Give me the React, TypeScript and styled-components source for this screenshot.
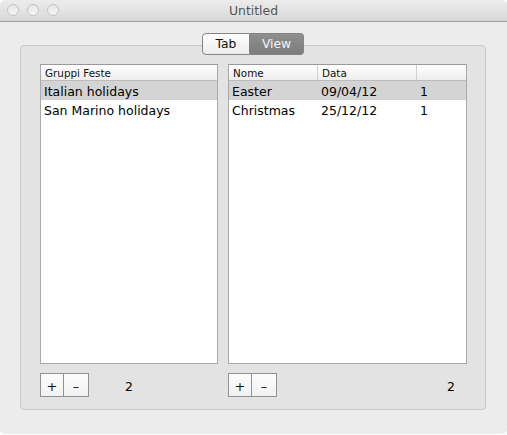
import React from "react";
import styled, { createGlobalStyle } from "styled-components";

const Global = createGlobalStyle`
  html, body { margin: 0; padding: 0; background: #ffffff; }
  body { font-family: "DejaVu Sans", "Liberation Sans", sans-serif; }
  * { box-sizing: border-box; }
`;

const Window = styled.div`
  width: 507px;
  height: 434px;
  background: #ececec;
  border-radius: 5px 5px 5px 5px;
  display: flex;
  flex-direction: column;
  overflow: hidden;
`;

const TitleBar = styled.div`
  height: 22px;
  flex: none;
  background: linear-gradient(#ececec, #d9d9d9);
  border-bottom: 1px solid #9c9c9c;
  display: grid;
  grid-template-columns: 80px 1fr 80px;
  align-items: center;
`;

const Lights = styled.div`
  display: flex;
  gap: 8px;
  padding-left: 7px;
  padding-bottom: 1px;
`;

const Light = styled.span`
  width: 12px;
  height: 12px;
  border-radius: 50%;
  border: 1px solid #c2c2c2;
  background: linear-gradient(#e6e6e6, #f6f6f6);
`;

const Title = styled.div`
  text-align: center;
  font-size: 12.4px;
  color: #555555;
  padding-bottom: 1px;
`;

const Content = styled.div`
  flex: 1;
  display: flex;
  flex-direction: column;
  padding: 11px 21px 24px 20px;
`;

const TabRow = styled.div`
  display: flex;
  justify-content: center;
  margin-bottom: -10px;
  position: relative;
  z-index: 1;
`;

const Segment = styled.div<{ $active?: boolean; $pos: "first" | "last" }>`
  height: 22px;
  width: ${(p) => (p.$pos === "first" ? "48px" : "54px")};
  display: flex;
  align-items: center;
  justify-content: center;
  font-size: 12.3px;
  color: ${(p) => (p.$active ? "#f4f4f4" : "#111111")};
  background: ${(p) =>
    p.$active
      ? "linear-gradient(#8f8f8f, #7c7c7c)"
      : "linear-gradient(#ffffff, #ececec)"};
  border: 1px solid #848484;
  border-left-width: ${(p) => (p.$pos === "last" ? "0" : "1px")};
  border-radius: ${(p) => (p.$pos === "first" ? "4px 0 0 4px" : "0 4px 4px 0")};
`;

const GroupBox = styled.div`
  height: 365px;
  background: #e3e3e3;
  border: 1px solid #c9c9c9;
  border-radius: 4px;
  padding: 18px 18px 12px 19px;
  display: grid;
  grid-template-columns: 178px 239px;
  grid-template-rows: 300px 24px;
  column-gap: 10px;
  row-gap: 9px;
`;

const ListBox = styled.div`
  background: #ffffff;
  border: 1px solid #a9a9a9;
  border-top-color: #9a9a9a;
  display: flex;
  flex-direction: column;
`;

const HeaderRow = styled.div<{ $cols: string }>`
  height: 16px;
  flex: none;
  display: grid;
  grid-template-columns: ${(p) => p.$cols};
  background: linear-gradient(#ffffff, #eeeeee);
  border-bottom: 1px solid #bcbcbc;
`;

const HeaderCell = styled.div<{ $divider?: boolean }>`
  font-size: 10.4px;
  color: #111111;
  padding-left: 4px;
  display: flex;
  align-items: center;
  border-right: ${(p) => (p.$divider ? "1px solid #d0d0d0" : "none")};
  white-space: nowrap;
`;

const Row = styled.div<{ $cols: string; $selected?: boolean }>`
  height: 19px;
  display: grid;
  grid-template-columns: ${(p) => p.$cols};
  background: ${(p) => (p.$selected ? "#d4d4d4" : "transparent")};
`;

const Cell = styled.div`
  font-size: 12.5px;
  color: #000000;
  padding-left: 3px;
  padding-top: 1px;
  display: flex;
  align-items: center;
  white-space: nowrap;
`;

const Footer = styled.div<{ $spread?: boolean }>`
  display: flex;
  align-items: center;
  justify-content: ${(p) => (p.$spread ? "space-between" : "flex-start")};
`;

const ButtonPair = styled.div`
  display: flex;
`;

const SquareButton = styled.button<{ $last?: boolean }>`
  width: ${(p) => (p.$last ? "25px" : "24px")};
  height: 24px;
  padding: 0;
  margin: 0;
  border: 1px solid #929292;
  border-left-width: ${(p) => (p.$last ? "0" : "1px")};
  background: linear-gradient(#fdfdfd, #f1f1f1);
  font-family: "DejaVu Sans", sans-serif;
  font-size: 13px;
  color: #111111;
  display: flex;
  align-items: center;
  justify-content: center;
  padding-top: 2px;
`;

const Count = styled.span<{ $left?: number; $right?: number }>`
  font-size: 12.5px;
  color: #000000;
  margin-left: ${(p) => p.$left ?? 0}px;
  margin-right: ${(p) => p.$right ?? 0}px;
  padding-top: 3px;
`;

const LEFT_COLS = "1fr";
const RIGHT_COLS = "89px 99px 1fr";

const groups = [
  { name: "Italian holidays", selected: true },
  { name: "San Marino holidays" },
];

const feste = [
  { nome: "Easter", data: "09/04/12", n: "1", selected: true },
  { nome: "Christmas", data: "25/12/12", n: "1" },
];

export default function App() {
  return (
    <>
      <Global />
      <Window>
        <TitleBar>
          <Lights>
            <Light />
            <Light />
            <Light />
          </Lights>
          <Title>Untitled</Title>
          <div />
        </TitleBar>
        <Content>
          <TabRow>
            <Segment $pos="first">Tab</Segment>
            <Segment $pos="last" $active>
              View
            </Segment>
          </TabRow>
          <GroupBox>
            <ListBox>
              <HeaderRow $cols={LEFT_COLS}>
                <HeaderCell>Gruppi Feste</HeaderCell>
              </HeaderRow>
              {groups.map((g) => (
                <Row key={g.name} $cols={LEFT_COLS} $selected={g.selected}>
                  <Cell>{g.name}</Cell>
                </Row>
              ))}
            </ListBox>
            <ListBox>
              <HeaderRow $cols={RIGHT_COLS}>
                <HeaderCell $divider>Nome</HeaderCell>
                <HeaderCell $divider>Data</HeaderCell>
                <HeaderCell />
              </HeaderRow>
              {feste.map((f) => (
                <Row key={f.nome} $cols={RIGHT_COLS} $selected={f.selected}>
                  <Cell>{f.nome}</Cell>
                  <Cell>{f.data}</Cell>
                  <Cell>{f.n}</Cell>
                </Row>
              ))}
            </ListBox>
            <Footer>
              <ButtonPair>
                <SquareButton>+</SquareButton>
                <SquareButton $last>–</SquareButton>
              </ButtonPair>
              <Count $left={36}>2</Count>
            </Footer>
            <Footer $spread>
              <ButtonPair>
                <SquareButton>+</SquareButton>
                <SquareButton $last>–</SquareButton>
              </ButtonPair>
              <Count $right={12}>2</Count>
            </Footer>
          </GroupBox>
        </Content>
      </Window>
    </>
  );
}
